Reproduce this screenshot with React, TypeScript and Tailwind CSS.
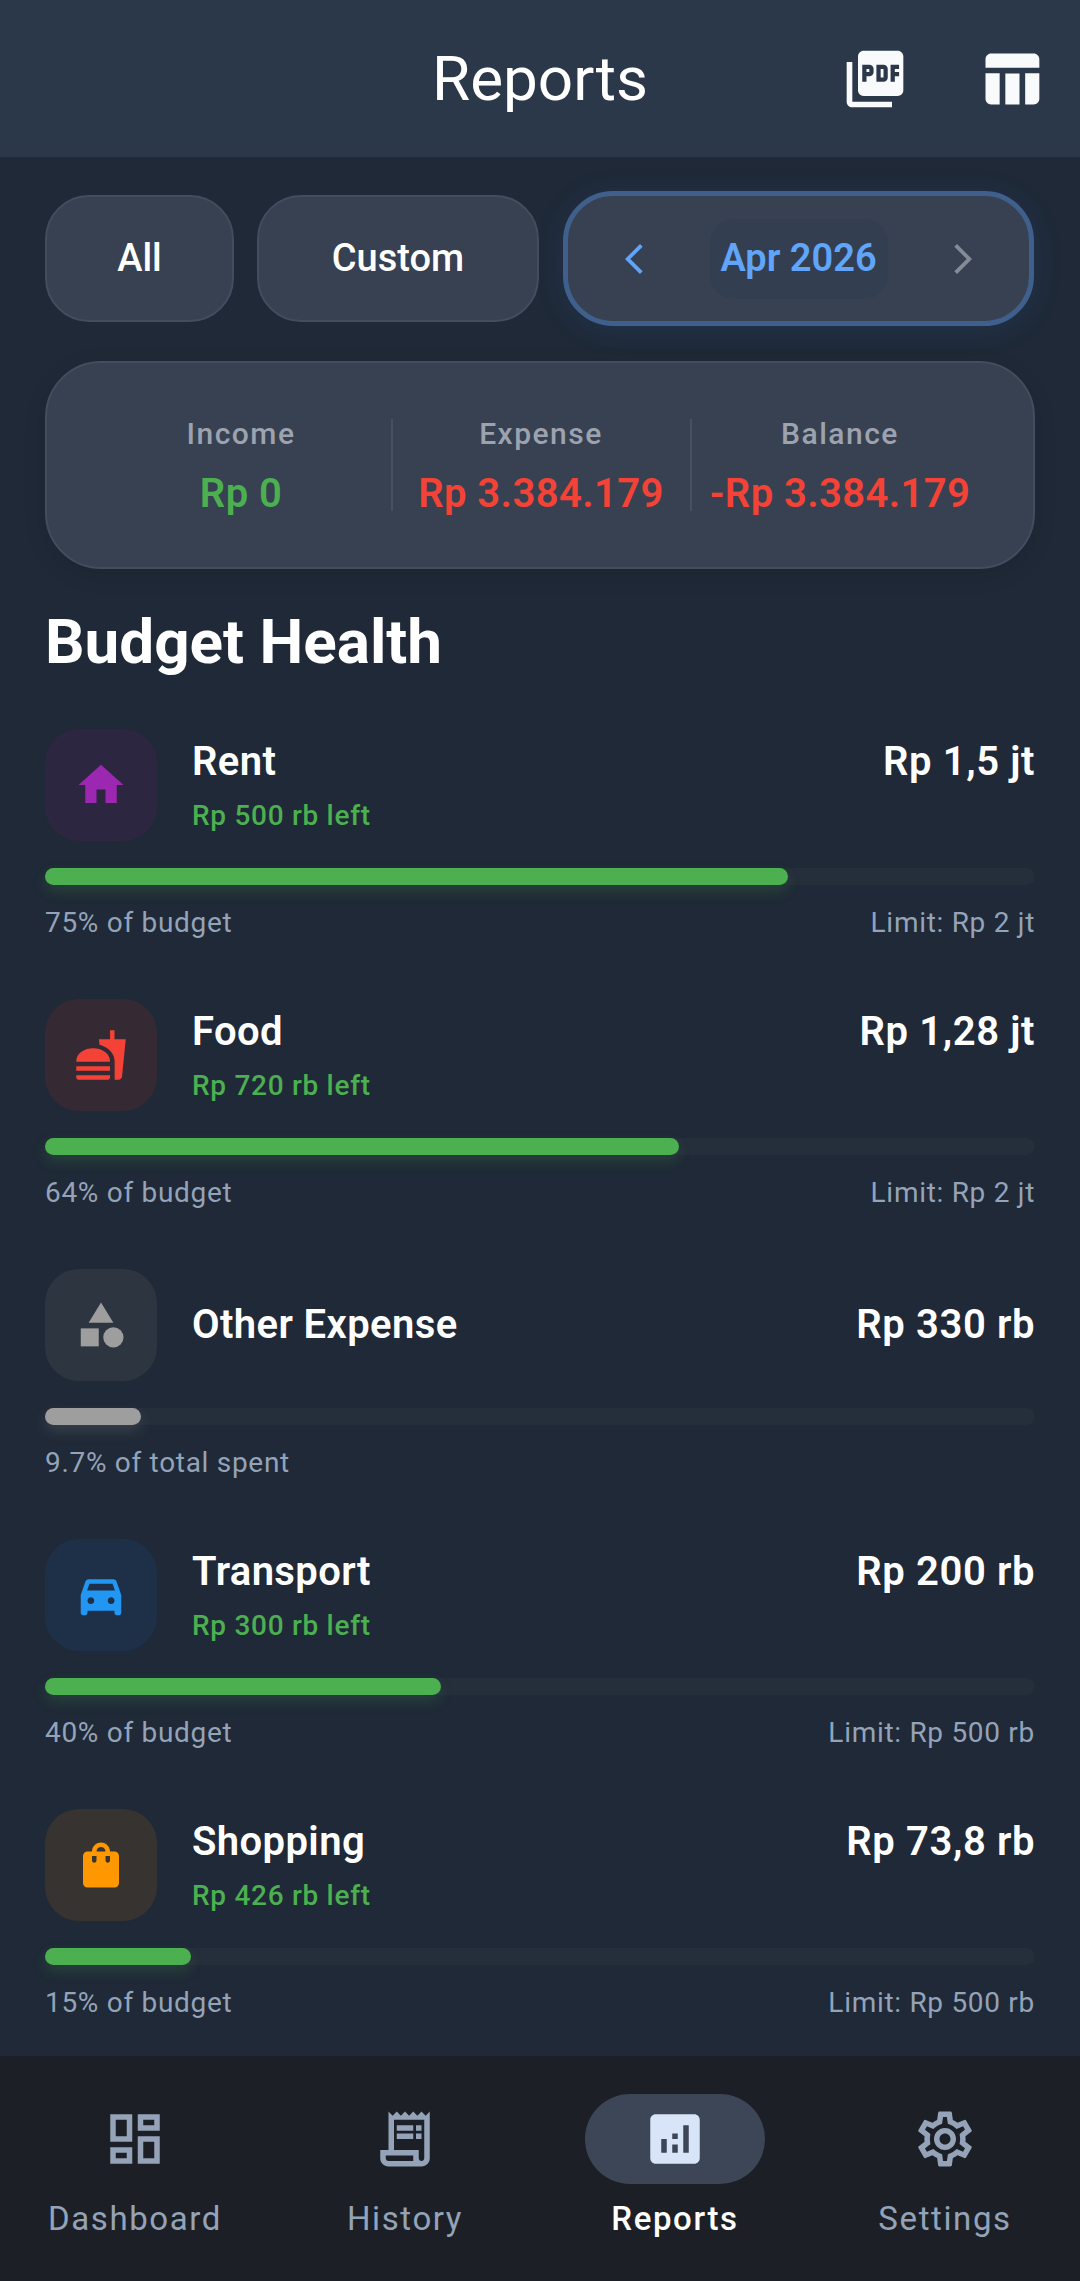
import React from 'react';
import {
  MdAnalytics,
  MdArrowBackIosNew,
  MdArrowForwardIos,
  MdCategory,
  MdDirectionsCarFilled,
  MdFastfood,
  MdHome,
  MdOutlineDashboard,
  MdOutlineReceiptLong,
  MdOutlineSettings,
  MdPictureAsPdf,
  MdShoppingBag,
  MdTableChart,
} from 'react-icons/md';

type Budget = {
  name: string;
  amount: string;
  left?: string;
  pct: number;
  note: string;
  limit?: string;
  icon: React.ReactNode;
  tint: string;
  bar: string;
};

const budgets: Budget[] = [
  { name: 'Rent', amount: 'Rp 1,5 jt', left: 'Rp 500 rb left', pct: 75, note: '75% of budget', limit: 'Limit: Rp 2 jt', icon: <MdHome className="text-[#9c27b0]" size={54} />, tint: 'bg-[#2d2640]', bar: 'bg-[#4caf50] shadow-[0_6px_14px_rgba(76,175,80,0.2)]' },
  { name: 'Food', amount: 'Rp 1,28 jt', left: 'Rp 720 rb left', pct: 64, note: '64% of budget', limit: 'Limit: Rp 2 jt', icon: <MdFastfood className="text-[#f44336]" size={54} />, tint: 'bg-[#352a33]', bar: 'bg-[#4caf50] shadow-[0_6px_14px_rgba(76,175,80,0.2)]' },
  { name: 'Other Expense', amount: 'Rp 330 rb', pct: 9.7, note: '9.7% of total spent', icon: <MdCategory className="text-[#9e9e9e]" size={54} />, tint: 'bg-[#2d3540]', bar: 'bg-[#9e9e9e] shadow-[0_6px_14px_rgba(158,158,158,0.2)]' },
  { name: 'Transport', amount: 'Rp 200 rb', left: 'Rp 300 rb left', pct: 40, note: '40% of budget', limit: 'Limit: Rp 500 rb', icon: <MdDirectionsCarFilled className="text-[#2196f3]" size={54} />, tint: 'bg-[#1e3048]', bar: 'bg-[#4caf50] shadow-[0_6px_14px_rgba(76,175,80,0.2)]' },
  { name: 'Shopping', amount: 'Rp 73,8 rb', left: 'Rp 426 rb left', pct: 14.75, note: '15% of budget', limit: 'Limit: Rp 500 rb', icon: <MdShoppingBag className="text-[#ff9800]" size={54} />, tint: 'bg-[#363330]', bar: 'bg-[#4caf50] shadow-[0_6px_14px_rgba(76,175,80,0.2)]' },
];

const BudgetRow: React.FC<{ item: Budget }> = ({ item }) => (
  <div className="h-[270px]">
    <div className="flex h-[112px] items-start">
      <div className={`flex h-[112px] w-[112px] shrink-0 items-center justify-center rounded-[34px] ${item.tint}`}>
        {item.icon}
      </div>
      <div className={`ml-[35px] flex h-full min-w-0 flex-1 flex-col ${item.left ? '' : 'justify-center'}`}>
        <div className="flex items-start justify-between">
          <span className="text-[40px] leading-[66px] font-semibold tracking-[0.4px] text-white">{item.name}</span>
          <span className="text-[40px] leading-[66px] font-semibold tracking-[0.6px] text-white">{item.amount}</span>
        </div>
        {item.left && <span className="text-[28px] leading-[42px] font-medium tracking-[0.7px] text-[#4caf50]">{item.left}</span>}
      </div>
    </div>
    <div className="mt-[27px] h-[17px] rounded-full bg-[#252e3b]">
      <div className={`h-full rounded-full ${item.bar}`} style={{ width: `${item.pct}%` }} />
    </div>
    <div className="mt-[20px] flex justify-between text-[28px] leading-[36px] tracking-[0.7px] text-[#94a3b8]">
      <span>{item.note}</span>
      {item.limit && <span>{item.limit}</span>}
    </div>
  </div>
);

const Stat: React.FC<{ label: string; value: string; color: string; divider?: boolean }> = ({ label, value, color, divider }) => (
  <div className={`flex h-[92px] w-[299px] flex-col items-center ${divider ? 'border-l-2 border-[#465061]' : ''}`}>
    <span className="text-[30px] leading-[30px] font-medium tracking-[1.5px] text-[#9ca3af]">{label}</span>
    <span className={`mt-[22px] shrink-0 text-[40px] leading-[46px] font-semibold tracking-[0.4px] ${color}`}>{value}</span>
  </div>
);

const NavItem: React.FC<{ label: string; icon: React.ReactNode; active?: boolean }> = ({ label, icon, active }) => (
  <div className="flex w-[270px] flex-col items-center">
    <div className={`flex h-[90px] w-[180px] items-center justify-center rounded-full ${active ? 'bg-[#3c4657] text-[#d8e4f8]' : 'text-[#94a3b8]'}`}>
      {icon}
    </div>
    <span className={`mt-[12px] text-[33px] leading-[46px] tracking-[1.6px] ${active ? 'font-medium text-white' : 'font-normal text-[#94a3b8]'}`}>{label}</span>
  </div>
);

export default function App() {
  return (
    <div className="flex h-[2281px] w-[1080px] flex-col overflow-hidden bg-[#1f2937] font-['Roboto',sans-serif]">
      <header className="relative flex h-[157px] shrink-0 items-center justify-center bg-[#2a384a]">
        <h1 className="text-[62px] leading-[72px] font-normal text-white">Reports</h1>
        <div className="absolute top-[45px] right-[35px] flex gap-[68px] text-[#f8fafc]">
          <MdPictureAsPdf size={68} />
          <MdTableChart size={68} />
        </div>
      </header>

      <main className="min-h-0 flex-1 overflow-hidden px-[45px] pt-[34px]">
        <div className="flex items-center">
          <button className="h-[127px] w-[189px] rounded-[44px] border-2 border-[#434d5e] bg-[#374151] text-[38px] font-medium text-white">All</button>
          <button className="ml-[23px] h-[127px] w-[282px] rounded-[44px] border-2 border-[#434d5e] bg-[#374151] text-[38px] font-medium text-white">Custom</button>
          <div className="ml-[24px] flex h-[135px] w-[471px] items-center justify-between rounded-[50px] border-[5px] border-[#3f608c] bg-[#374151] px-[48px] shadow-[0_4px_30px_rgba(59,130,246,0.12)]">
            <MdArrowBackIosNew className="text-[#60a5fa]" size={36} />
            <div className="flex h-[80px] w-[178px] items-center justify-center rounded-[24px] bg-[#333f50] text-[38px] font-semibold whitespace-nowrap text-[#60a5fa]">Apr 2026</div>
            <MdArrowForwardIos className="text-[#858c98]" size={36} />
          </div>
        </div>

        <div className="mt-[35px] flex h-[208px] items-center justify-center rounded-[56px] border-2 border-[#434d5e] bg-[#374151] shadow-[0_6px_24px_rgba(0,0,0,0.08)]">
          <Stat label="Income" value="Rp 0" color="text-[#4caf50]" />
          <Stat label="Expense" value="Rp 3.384.179" color="text-[#f44336]" divider />
          <Stat label="Balance" value="-Rp 3.384.179" color="text-[#f44336]" divider />
        </div>

        <h2 className="mt-[38px] text-[62px] leading-[70px] font-bold text-white">Budget Health</h2>

        <div className="mt-[52px]">
          {budgets.map((b) => (
            <BudgetRow key={b.name} item={b} />
          ))}
        </div>
      </main>

      <nav className="flex h-[225px] shrink-0 items-start bg-[#1c2026] pt-[38px]">
        <NavItem label="Dashboard" icon={<MdOutlineDashboard size={66} />} />
        <NavItem label="History" icon={<MdOutlineReceiptLong size={66} />} />
        <NavItem label="Reports" icon={<MdAnalytics size={66} />} active />
        <NavItem label="Settings" icon={<MdOutlineSettings size={66} />} />
      </nav>
    </div>
  );
}
